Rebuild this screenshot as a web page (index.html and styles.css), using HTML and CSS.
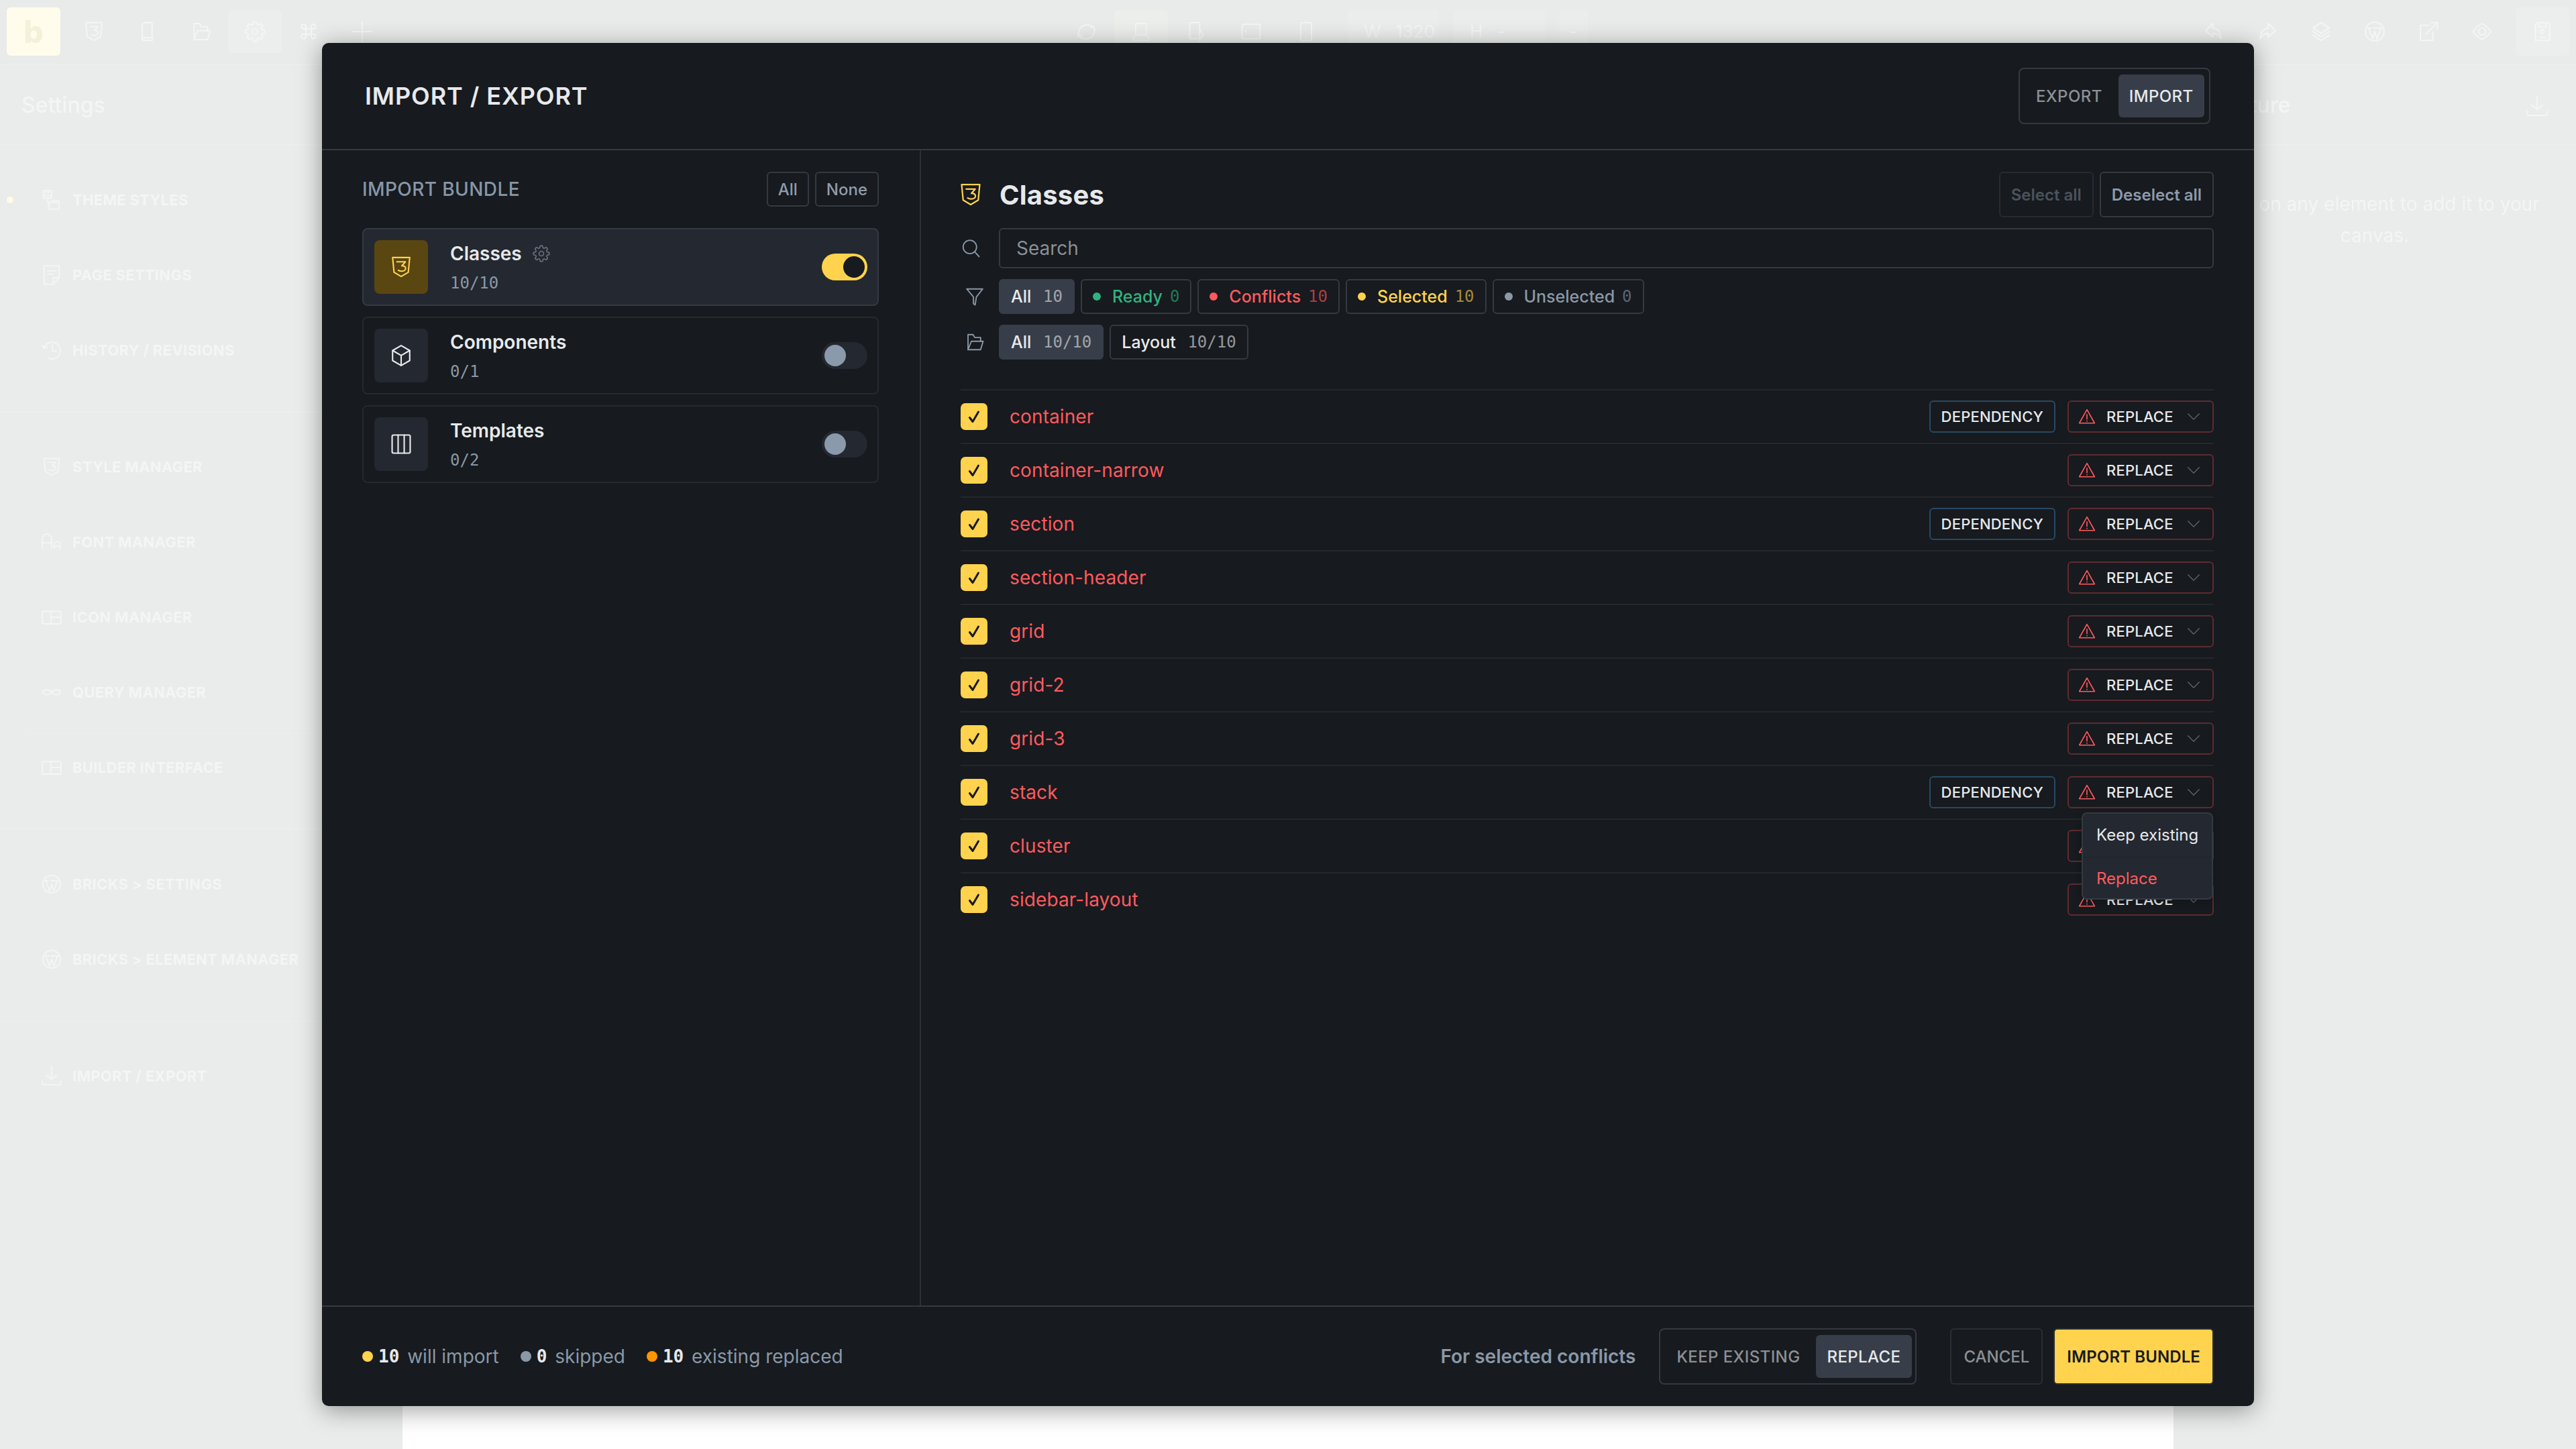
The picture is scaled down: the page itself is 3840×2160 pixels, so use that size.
FILE: index.html
```html
<!DOCTYPE html>
<html lang="en">
<head>
  <meta charset="UTF-8">
  <meta name="viewport" content="width=device-width, initial-scale=1.0">
  <title>Import / Export</title>
  <link rel="stylesheet" href="styles.css">
</head>
<body>
  <svg class="sprite" xmlns="http://www.w3.org/2000/svg">
    <symbol id="i-css" viewBox="0 0 24 24"><path d="M3 2h18l-1.500 15.500L12 22l-7.500-4.500z"/><path d="M7.500 6.500h9l-3.800 4.300c2.600 0 4 1 4 2.700 0 1.700-1.900 2.900-4.200 2.900-1.200 0-2.400-.3-3.500-1"/></symbol>
    <symbol id="i-gear" viewBox="0 0 24 24"><circle cx="12" cy="12" r="3.200"/><path d="M19.400 15a1.650 1.650 0 0 0 .33 1.820l.06.06a2 2 0 0 1-2.830 2.830l-.06-.06a1.650 1.650 0 0 0-1.820-.33 1.650 1.650 0 0 0-1 1.510V21a2 2 0 0 1-4 0v-.09A1.650 1.650 0 0 0 9 19.400a1.650 1.650 0 0 0-1.820.33l-.06.06a2 2 0 0 1-2.830-2.830l.06-.06a1.650 1.650 0 0 0 .33-1.820 1.650 1.650 0 0 0-1.510-1H3a2 2 0 0 1 0-4h.09A1.650 1.650 0 0 0 4.600 9a1.650 1.650 0 0 0-.33-1.820l-.06-.06a2 2 0 0 1 2.830-2.830l.06.06a1.650 1.650 0 0 0 1.820.33H9a1.650 1.650 0 0 0 1-1.510V3a2 2 0 0 1 4 0v.09a1.650 1.650 0 0 0 1 1.510 1.650 1.650 0 0 0 1.820-.33l.06-.06a2 2 0 0 1 2.830 2.830l-.06.06a1.650 1.650 0 0 0-.33 1.820V9a1.650 1.650 0 0 0 1.510 1H21a2 2 0 0 1 0 4h-.09a1.650 1.650 0 0 0-1.510 1z"/></symbol>
    <symbol id="i-box" viewBox="0 0 24 24"><path d="M12 1.500l9 5.200v10.600l-9 5.200-9-5.200V6.700z"/><path d="M3 6.700l9 5.200 9-5.200M12 11.900v10.600"/></symbol>
    <symbol id="i-cols" viewBox="0 0 24 24"><rect x="2.500" y="2.500" width="19" height="19" rx="1.500"/><path d="M8.800 2.500v19M15.200 2.500v19"/></symbol>
    <symbol id="i-search" viewBox="0 0 24 24"><circle cx="11" cy="10.500" r="8"/><path d="M16.800 16.300L22 22"/></symbol>
    <symbol id="i-filter" viewBox="0 0 24 24"><path d="M2.500 3h19l-7.500 9.500-1.500 9.500-2-1.500v-8z"/></symbol>
    <symbol id="i-folder" viewBox="0 0 24 24"><path d="M4 21V3h6l2 3.500h7V11"/><path d="M4 21h15l3-10H8z"/></symbol>
    <symbol id="i-warn" viewBox="0 0 24 24"><path d="M12 2.500L22.500 21h-21z"/><path d="M12 9v6.500M12 18v.5"/></symbol>
    <symbol id="i-chev" viewBox="0 0 24 24"><path d="M2 7l10 10L22 7"/></symbol>
    <symbol id="i-check" viewBox="0 0 24 24"><path d="M5.500 13.500l4.500 6L18.500 5"/></symbol>
    <symbol id="i-page" viewBox="0 0 24 24"><path d="M8 2h9v17H6V4zM6 19v1.500c0 1 .7 1.500 1.500 1.500H17l1-2"/></symbol>
    <symbol id="i-cmd" viewBox="0 0 24 24"><path d="M9 9h6v6H9zM9 9H6.500A2.500 2.500 0 1 1 9 6.500zM15 9V6.500A2.500 2.500 0 1 1 17.500 9zM15 15h2.500a2.500 2.500 0 1 1-2.500 2.500zM9 15v2.500A2.500 2.500 0 1 1 6.500 15z"/></symbol>
    <symbol id="i-plus" viewBox="0 0 24 24"><path d="M12 1v22M1 12h22"/></symbol>
    <symbol id="i-sync" viewBox="0 0 24 24"><path d="M19 6.500A9.500 9.500 0 0 0 4.500 18M5 17.500A9.500 9.500 0 0 0 20 6M2.500 15.500l2 2.500 2.500-2M17 7.500l2.500-1.500 1.500 2.500"/></symbol>
    <symbol id="i-laptop" viewBox="0 0 24 24"><path d="M6 3h12v13H6zM6 16L3 20v2h18v-2l-3-4"/></symbol>
    <symbol id="i-tablet-l" viewBox="0 0 24 24"><path d="M5 2h11v18H5zM16 9l4 7-4 6"/></symbol>
    <symbol id="i-tablet" viewBox="0 0 24 24"><rect x="2" y="4" width="20" height="16" rx="1.500"/><path d="M6 11v1"/></symbol>
    <symbol id="i-phone" viewBox="0 0 24 24"><rect x="6" y="2" width="12" height="20" rx="1.500"/><path d="M12 18v.5"/></symbol>
    <symbol id="i-undo" viewBox="0 0 24 24"><path d="M11 3L3 11l8 7v-4c4 0 7 2 9 6 0-7-3-11-9-12z"/></symbol>
    <symbol id="i-redo" viewBox="0 0 24 24"><path d="M13 3l8 8-8 7v-4c-4 0-7 2-9 6 0-7 3-11 9-12z"/></symbol>
    <symbol id="i-layers" viewBox="0 0 24 24"><path d="M12 2l9 6-9 6-9-6zM3 12l9 6 9-6M3 16l9 6 9-6"/></symbol>
    <symbol id="i-wp" viewBox="0 0 24 24"><circle cx="12" cy="12" r="10.500"/><path d="M5 8l4.500 12L12 12l2.500 8L19 8M4 8h4M11 8h4M16.500 8H20"/></symbol>
    <symbol id="i-ext" viewBox="0 0 24 24"><path d="M12 5H3v17h14v-9M9 15L22 2M15 2h7v7"/></symbol>
    <symbol id="i-eye" viewBox="0 0 24 24"><path d="M12 3c5 3 8 6 10 9-2 3-5 6-10 9-5-3-8-6-10-9 2-3 5-6 10-9z"/><circle cx="12" cy="12" r="4"/></symbol>
    <symbol id="i-save" viewBox="0 0 24 24"><path d="M4 4l3-2h11l2 2v18H4z"/><path d="M8 2v5h8V2"/><circle cx="12" cy="12" r="2"/><path d="M9 18.500h6"/></symbol>
    <symbol id="i-download" viewBox="0 0 24 24"><path d="M12 1v15M6 11l6 5 6-5M1 18v3c0 1 .5 1.500 1.500 1.500h19c1 0 1.500-.5 1.500-1.500v-3"/></symbol>
    <symbol id="i-brush" viewBox="0 0 24 24"><path d="M2 1h10v9H2zM2 7h10M5 1v3M8 1v3M7 10v5h14v8H9v-8M12 13h9"/></symbol>
    <symbol id="i-doc" viewBox="0 0 24 24"><path d="M3 1h18v14l-7 8H3zM7 7h10M7 11h7M14 23v-8h7"/></symbol>
    <symbol id="i-history" viewBox="0 0 24 24"><path d="M3 9A10 10 0 1 1 9 22M1 6l2 4 4-2M13 6v7h5"/></symbol>
    <symbol id="i-font" viewBox="0 0 24 24"><path d="M1 20V8a5.500 5.500 0 0 1 11 0v12M1 13h11M15 20v-5a3.500 3.500 0 0 1 7 0v5M15 17h7"/></symbol>
    <symbol id="i-layout" viewBox="0 0 24 24"><rect x="1" y="5" width="22" height="15" rx="1"/><path d="M11 5v15M11 12h12"/></symbol>
    <symbol id="i-query" viewBox="0 0 24 24"><path d="M12 12C9 8 3 8 1.500 12 3 16 9 16 12 12c3-4 9-4 10.500 0C21 16 15 16 12 12z"/></symbol>
  </svg>

  <!-- builder behind the modal -->
  <header class="topbar">
    <div class="bar-group">
      <div class="logo">b</div>
      <span class="bar-btn"><svg class="bar-icon"><use href="#i-css"/></svg></span>
      <span class="bar-btn"><svg class="bar-icon"><use href="#i-page"/></svg></span>
      <span class="bar-btn"><svg class="bar-icon"><use href="#i-folder"/></svg></span>
      <span class="bar-btn is-active"><svg class="bar-icon"><use href="#i-gear"/></svg></span>
      <span class="bar-btn"><svg class="bar-icon"><use href="#i-cmd"/></svg></span>
      <span class="bar-btn"><svg class="bar-icon"><use href="#i-plus"/></svg></span>
    </div>
    <div class="bar-group bar-center">
      <span class="bar-btn"><svg class="bar-icon"><use href="#i-sync"/></svg></span>
      <span class="bar-btn is-active is-laptop"><svg class="bar-icon"><use href="#i-laptop"/></svg></span>
      <span class="bar-btn"><svg class="bar-icon"><use href="#i-tablet-l"/></svg></span>
      <span class="bar-btn"><svg class="bar-icon"><use href="#i-tablet"/></svg></span>
      <span class="bar-btn"><svg class="bar-icon"><use href="#i-phone"/></svg></span>
      <span class="size-box">W <b>1320</b></span>
      <span class="size-box">H <b>-</b></span>
      <span class="size-box size-small">-</span>
    </div>
    <div class="bar-group bar-right">
      <span class="bar-btn"><svg class="bar-icon"><use href="#i-undo"/></svg></span>
      <span class="bar-btn"><svg class="bar-icon"><use href="#i-redo"/></svg></span>
      <span class="bar-btn"><svg class="bar-icon"><use href="#i-layers"/></svg></span>
      <span class="bar-btn"><svg class="bar-icon"><use href="#i-wp"/></svg></span>
      <span class="bar-btn"><svg class="bar-icon"><use href="#i-ext"/></svg></span>
      <span class="bar-btn"><svg class="bar-icon"><use href="#i-eye"/></svg></span>
      <span class="bar-btn is-save"><svg class="bar-icon"><use href="#i-save"/></svg></span>
    </div>
  </header>

  <div class="builder">
    <aside class="side side-left">
      <div class="side-head">Settings</div>
      <div class="side-group">
        <span class="side-dot"></span>
        <div class="side-row"><svg class="side-icon"><use href="#i-brush"/></svg>THEME STYLES</div>
        <div class="side-row"><svg class="side-icon"><use href="#i-doc"/></svg>PAGE SETTINGS</div>
        <div class="side-row"><svg class="side-icon"><use href="#i-history"/></svg>HISTORY / REVISIONS</div>
      </div>
      <div class="side-group">
        <div class="side-row"><svg class="side-icon"><use href="#i-css"/></svg>STYLE MANAGER</div>
        <div class="side-row"><svg class="side-icon"><use href="#i-font"/></svg>FONT MANAGER</div>
        <div class="side-row"><svg class="side-icon"><use href="#i-layout"/></svg>ICON MANAGER</div>
        <div class="side-row"><svg class="side-icon"><use href="#i-query"/></svg>QUERY MANAGER</div>
        <div class="side-row"><svg class="side-icon"><use href="#i-layout"/></svg>BUILDER INTERFACE</div>
      </div>
      <div class="side-group">
        <div class="side-row"><svg class="side-icon"><use href="#i-wp"/></svg>BRICKS &gt; SETTINGS</div>
        <div class="side-row"><svg class="side-icon"><use href="#i-wp"/></svg>BRICKS &gt; ELEMENT MANAGER</div>
      </div>
      <div class="side-group">
        <div class="side-row"><svg class="side-icon"><use href="#i-download"/></svg>IMPORT / EXPORT</div>
      </div>
    </aside>
    <main class="canvas"></main>
    <aside class="side side-right">
      <div class="side-head">Structure<svg class="head-icon"><use href="#i-download"/></svg></div>
      <p class="side-note">Click on any element to add it to your canvas.</p>
    </aside>
  </div>

  <!-- modal -->
  <section class="modal">
    <div class="modal-head">
      <h1>IMPORT / EXPORT</h1>
      <div class="seg seg-head">
        <button class="seg-btn">EXPORT</button>
        <button class="seg-btn is-on">IMPORT</button>
      </div>
    </div>

    <div class="modal-body">
      <div class="bundle">
        <div class="bundle-head">
          <h2>IMPORT BUNDLE</h2>
          <div class="mini-btns">
            <button class="mini-btn">All</button>
            <button class="mini-btn">None</button>
          </div>
        </div>

        <div class="bundle-card is-on">
          <div class="card-icon is-on"><svg class="card-svg"><use href="#i-css"/></svg></div>
          <div class="card-text">
            <div class="card-name">Classes<svg class="card-gear"><use href="#i-gear"/></svg></div>
            <div class="card-count">10/10</div>
          </div>
          <span class="toggle is-on"><i></i></span>
        </div>
        <div class="bundle-card">
          <div class="card-icon"><svg class="card-svg"><use href="#i-box"/></svg></div>
          <div class="card-text">
            <div class="card-name">Components</div>
            <div class="card-count">0/1</div>
          </div>
          <span class="toggle"><i></i></span>
        </div>
        <div class="bundle-card">
          <div class="card-icon"><svg class="card-svg"><use href="#i-cols"/></svg></div>
          <div class="card-text">
            <div class="card-name">Templates</div>
            <div class="card-count">0/2</div>
          </div>
          <span class="toggle"><i></i></span>
        </div>
      </div>

      <div class="detail">
        <div class="detail-head">
          <svg class="detail-icon"><use href="#i-css"/></svg>
          <h2>Classes</h2>
          <button class="sel-btn is-dim">Select all</button>
          <button class="sel-btn">Deselect all</button>
        </div>

        <div class="tool-row tool-search">
          <svg class="tool-icon"><use href="#i-search"/></svg>
          <input class="search" type="text" placeholder="Search">
        </div>
        <div class="tool-row">
          <svg class="tool-icon is-shift"><use href="#i-filter"/></svg>
          <span class="chip is-on">All <span class="num">10</span></span>
          <span class="chip c-green"><i class="dot"></i><span class="chip-label">Ready</span> <span class="num">0</span></span>
          <span class="chip c-red"><i class="dot"></i><span class="chip-label">Conflicts</span> <span class="num">10</span></span>
          <span class="chip c-yellow"><i class="dot"></i><span class="chip-label">Selected</span> <span class="num">10</span></span>
          <span class="chip c-gray"><i class="dot"></i><span class="chip-label">Unselected</span> <span class="num">0</span></span>
        </div>
        <div class="tool-row">
          <svg class="tool-icon is-shift"><use href="#i-folder"/></svg>
          <span class="chip is-on">All <span class="num">10/10</span></span>
          <span class="chip c-white">Layout <span class="num">10/10</span></span>
        </div>

        <ul class="class-list">
          <li class="class-row">
            <span class="check"><svg class="check-svg"><use href="#i-check"/></svg></span>
            <span class="class-name">container</span>
            <span class="tag">DEPENDENCY</span>
            <span class="action"><svg class="warn"><use href="#i-warn"/></svg>REPLACE<svg class="chev"><use href="#i-chev"/></svg></span>
          </li>
          <li class="class-row">
            <span class="check"><svg class="check-svg"><use href="#i-check"/></svg></span>
            <span class="class-name">container-narrow</span>
            <span class="action"><svg class="warn"><use href="#i-warn"/></svg>REPLACE<svg class="chev"><use href="#i-chev"/></svg></span>
          </li>
          <li class="class-row">
            <span class="check"><svg class="check-svg"><use href="#i-check"/></svg></span>
            <span class="class-name">section</span>
            <span class="tag">DEPENDENCY</span>
            <span class="action"><svg class="warn"><use href="#i-warn"/></svg>REPLACE<svg class="chev"><use href="#i-chev"/></svg></span>
          </li>
          <li class="class-row">
            <span class="check"><svg class="check-svg"><use href="#i-check"/></svg></span>
            <span class="class-name">section-header</span>
            <span class="action"><svg class="warn"><use href="#i-warn"/></svg>REPLACE<svg class="chev"><use href="#i-chev"/></svg></span>
          </li>
          <li class="class-row">
            <span class="check"><svg class="check-svg"><use href="#i-check"/></svg></span>
            <span class="class-name">grid</span>
            <span class="action"><svg class="warn"><use href="#i-warn"/></svg>REPLACE<svg class="chev"><use href="#i-chev"/></svg></span>
          </li>
          <li class="class-row">
            <span class="check"><svg class="check-svg"><use href="#i-check"/></svg></span>
            <span class="class-name">grid-2</span>
            <span class="action"><svg class="warn"><use href="#i-warn"/></svg>REPLACE<svg class="chev"><use href="#i-chev"/></svg></span>
          </li>
          <li class="class-row">
            <span class="check"><svg class="check-svg"><use href="#i-check"/></svg></span>
            <span class="class-name">grid-3</span>
            <span class="action"><svg class="warn"><use href="#i-warn"/></svg>REPLACE<svg class="chev"><use href="#i-chev"/></svg></span>
          </li>
          <li class="class-row">
            <span class="check"><svg class="check-svg"><use href="#i-check"/></svg></span>
            <span class="class-name">stack</span>
            <span class="tag">DEPENDENCY</span>
            <span class="action is-open"><svg class="warn"><use href="#i-warn"/></svg>REPLACE<svg class="chev"><use href="#i-chev"/></svg>
              <span class="menu">
                <span class="menu-item">Keep existing</span>
                <span class="menu-item is-red">Replace</span>
              </span>
            </span>
          </li>
          <li class="class-row">
            <span class="check"><svg class="check-svg"><use href="#i-check"/></svg></span>
            <span class="class-name">cluster</span>
            <span class="action"><svg class="warn"><use href="#i-warn"/></svg>REPLACE<svg class="chev"><use href="#i-chev"/></svg></span>
          </li>
          <li class="class-row">
            <span class="check"><svg class="check-svg"><use href="#i-check"/></svg></span>
            <span class="class-name">sidebar-layout</span>
            <span class="action"><svg class="warn"><use href="#i-warn"/></svg>REPLACE<svg class="chev"><use href="#i-chev"/></svg></span>
          </li>
        </ul>
      </div>
    </div>

    <div class="modal-foot">
      <div class="stats">
        <span class="stat"><i class="stat-dot s-yellow"></i><b>10</b> will import</span>
        <span class="stat"><i class="stat-dot s-gray"></i><b>0</b> skipped</span>
        <span class="stat"><i class="stat-dot s-orange"></i><b>10</b> existing replaced</span>
      </div>
      <span class="foot-label">For selected conflicts</span>
      <div class="seg seg-foot">
        <button class="seg-btn">KEEP EXISTING</button>
        <button class="seg-btn is-on">REPLACE</button>
      </div>
      <button class="foot-btn">CANCEL</button>
      <button class="foot-btn is-primary">IMPORT BUNDLE</button>
    </div>
  </section>
</body>
</html>
```

FILE: styles.css
```css
* {
  box-sizing: border-box;
}
html, body {
  margin: 0;
  height: 2160px;
  overflow: hidden;
}
body {
  position: relative;
  font-family: Inter, "Noto Sans", sans-serif;
  background-color: #e9ebea;
  color: #f4f5f5;
}
button, input {
  font-family: inherit;
}
h1, h2, p, ul {
  margin: 0;
  padding: 0;
}
.sprite {
  display: none;
}
svg {
  fill: none;
  stroke: currentColor;
  stroke-width: 1.5;
  stroke-linejoin: round;
  stroke-linecap: round;
}

/* faded builder */
.topbar {
  display: flex;
  height: 97px;
  padding: 11px 10px 0;
  border-bottom: 2px solid #eceeed;
}
.bar-group {
  display: flex;
  height: 72px;
}
.bar-center {
  margin-left: 999px;
  gap: 2px;
}
.bar-right {
  margin-left: auto;
}
.logo {
  width: 80px;
  height: 72px;
  margin-right: 10px;
  border-radius: 6px;
  background-color: #fffcec;
  color: #f5f0da;
  font-size: 46px;
  font-weight: 800;
  line-height: 72px;
  text-align: center;
}
.bar-btn {
  display: flex;
  align-items: center;
  justify-content: center;
  width: 80px;
  height: 72px;
}
.bar-btn.is-active {
  height: 64px;
  margin-top: 4px;
  border-radius: 6px;
  background-color: #eceeed;
}
.bar-btn.is-laptop {
  background-color: #eceeec;
}
.bar-btn.is-save {
  margin-left: 10px;
  background-color: #eceeed;
  border-radius: 6px;
}
.bar-icon {
  width: 32px;
  height: 34px;
}
.size-box {
  width: 136px;
  height: 64px;
  margin: 4px 0 0 20px;
  padding-left: 24px;
  border-radius: 4px;
  background-color: #ebedec;
  font-size: 26px;
  line-height: 64px;
}
.size-box b {
  margin-left: 14px;
  font-weight: 400;
}
.size-small {
  width: 42px;
  padding-left: 14px;
}
.builder {
  display: flex;
  height: 2063px;
}
.side {
  flex: 0 0 600px;
  background-color: #eaebeb;
}
.canvas {
  flex: 1;
  background-color: #ffffff;
}
.side-head {
  display: flex;
  align-items: center;
  justify-content: space-between;
  height: 120px;
  padding: 0 42px 0 32px;
  border-bottom: 2px solid #eceeed;
  font-size: 32px;
  font-weight: 500;
}
.head-icon {
  width: 32px;
  height: 36px;
  margin-top: 4px;
}
.side-group {
  position: relative;
  display: flex;
  flex-direction: column;
  gap: 8px;
  padding: 29px 0 39px 32px;
  border-bottom: 2px solid #eceeed;
}
.side-group:last-child {
  border-bottom: none;
}
.side-dot {
  position: absolute;
  left: 10px;
  top: 76px;
  width: 10px;
  height: 10px;
  border-radius: 50%;
  background-color: #fffbe4;
}
.side-row {
  display: flex;
  align-items: center;
  gap: 16px;
  height: 104px;
  padding-left: 30px;
  font-size: 22px;
  font-weight: 700;
  letter-spacing: 0.3px;
  white-space: nowrap;
  border-radius: 6px;
  background-color: #eaebeb;
  box-shadow: inset 0 1px 0 #ecedec;
}
.side-icon {
  width: 30px;
  height: 32px;
}
.side-note {
  padding: 64px 30px 0;
  font-size: 28px;
  line-height: 47px;
  text-align: center;
}

/* modal */
.modal {
  position: absolute;
  left: 480px;
  top: 64px;
  display: flex;
  flex-direction: column;
  width: 2880px;
  height: 2032px;
  border-radius: 10px;
  background-color: #171a1e;
  color: #e6e9ec;
  box-shadow: 0 6px 36px rgba(0, 0, 0, 0.38);
}
.modal-head {
  display: flex;
  align-items: center;
  justify-content: space-between;
  flex: 0 0 160px;
  padding: 0 65px 0 64px;
  border-bottom: 2px solid #343a43;
}
.modal-head h1 {
  font-size: 36px;
  font-weight: 600;
  letter-spacing: 0.9px;
}
.seg {
  display: flex;
  height: 84px;
  border: 2px solid #343a43;
  border-radius: 8px;
  padding: 8px;
  gap: 8px;
  align-items: stretch;
}
.seg-btn {
  padding: 0 16px;
  border: none;
  border-radius: 6px;
  background: none;
  color: #8b9096;
  font-size: 24px;
  font-weight: 500;
  letter-spacing: 0.4px;
  white-space: nowrap;
}
.seg-btn.is-on {
  background-color: #373e49;
  color: #e6e9ec;
}
.seg-head {
  width: 286px;
}
.seg-foot {
  width: 384px;
  justify-content: space-between;
}
.modal-body {
  display: flex;
  flex: 1;
  min-height: 0;
}

/* left column */
.bundle {
  flex: 0 0 893px;
  padding: 32px 61px 0 60px;
  border-right: 2px solid #2c3138;
}
.bundle-head {
  display: flex;
  align-items: center;
  justify-content: space-between;
  height: 52px;
  margin-bottom: 32px;
}
.bundle-head h2 {
  color: #8796a8;
  font-size: 28px;
  font-weight: 500;
  letter-spacing: 0.4px;
}
.mini-btns {
  display: flex;
  gap: 9px;
}
.mini-btn {
  height: 52px;
  padding: 0 15px;
  border: 2px solid #343a43;
  border-radius: 6px;
  background: none;
  color: #8f9cab;
  font-size: 24px;
  font-weight: 500;
}
.bundle-card {
  display: flex;
  align-items: center;
  height: 116px;
  margin-bottom: 16px;
  padding: 0 15px 0 16px;
  border: 2px solid #262a30;
  border-radius: 8px;
}
.bundle-card.is-on {
  border-color: #343a43;
  background-color: #242830;
}
.card-icon {
  display: flex;
  align-items: center;
  justify-content: center;
  width: 80px;
  height: 80px;
  border-radius: 8px;
  background-color: #242830;
  color: #e6e9ec;
}
.card-icon.is-on {
  background-color: #5a4610;
  color: #ffd34d;
}
.card-svg {
  width: 34px;
  height: 34px;
}
.card-text {
  flex: 1;
  margin-left: 33px;
}
.card-name {
  display: flex;
  align-items: center;
  gap: 16px;
  height: 36px;
  font-size: 28px;
  font-weight: 600;
}
.card-gear {
  width: 26px;
  height: 26px;
  color: #66727f;
}
.card-count {
  margin-top: 12px;
  color: #8a98a8;
  font-family: "DejaVu Sans Mono", monospace;
  font-size: 24px;
  line-height: 28px;
}
.toggle {
  display: block;
  width: 68px;
  height: 40px;
  padding: 4px;
  border-radius: 20px;
  background-color: #242830;
}
.toggle i {
  display: block;
  width: 32px;
  height: 32px;
  border-radius: 50%;
  background-color: #8a9aab;
}
.toggle.is-on {
  background-color: #ffd34d;
}
.toggle.is-on i {
  margin-left: 28px;
  background-color: #171a1e;
}

/* right column */
.detail {
  flex: 1;
  min-width: 0;
  padding: 32px 60px 0 59px;
}
.detail-head {
  display: flex;
  align-items: center;
  gap: 9px;
  height: 68px;
}
.detail-icon {
  width: 38px;
  height: 36px;
  margin-left: -4px;
  margin-right: 15px;
  color: #ffd34d;
}
.detail-head h2 {
  flex: 1;
  font-size: 40px;
  font-weight: 700;
  letter-spacing: 0.2px;
}
.sel-btn {
  height: 68px;
  padding: 0 16px;
  border: 2px solid #343a43;
  border-radius: 6px;
  background: none;
  color: #8c9bab;
  font-size: 24px;
  font-weight: 600;
}
.sel-btn.is-dim {
  border-color: #272b31;
  color: #4b535d;
}
.tool-row {
  display: flex;
  align-items: center;
  gap: 9px;
  height: 52px;
  margin-top: 16px;
}
.tool-search {
  height: 60px;
}
.tool-icon {
  flex: none;
  width: 30px;
  height: 30px;
  margin-right: 18px;
  color: #8a98a8;
}
.tool-icon.is-shift {
  margin-left: 6px;
  margin-right: 12px;
}
.search {
  flex: 1;
  height: 60px;
  padding: 0 24px;
  border: 2px solid #343a43;
  border-radius: 6px;
  background: none;
  color: #e6e9ec;
  font-size: 28px;
}
.search::placeholder {
  color: #8a8f95;
}
.chip {
  display: flex;
  align-items: center;
  height: 52px;
  padding: 0 16px;
  border: 2px solid #343a43;
  border-radius: 6px;
  font-size: 25px;
  font-weight: 500;
  white-space: pre;
}
.chip.is-on {
  border-color: #373e49;
  background-color: #373e49;
  color: #e6e9ec;
}
.num {
  margin-left: 11px;
  opacity: 0.6;
  font-family: "DejaVu Sans Mono", monospace;
  font-size: 24px;
  font-weight: 400;
}
.dot {
  width: 12px;
  height: 12px;
  margin-right: 17px;
  border-radius: 50%;
  background-color: currentColor;
}
.c-green { color: #2fb380; }
.c-red { color: #ff5a5f; }
.c-yellow { color: #ffd34d; }
.c-gray { color: #8a98a8; }
.c-white { color: #e6e9ec; }
.class-list {
  margin-top: 44px;
  border-top: 2px solid #24282e;
  list-style: none;
}
.class-row {
  display: flex;
  align-items: center;
  height: 80px;
  border-bottom: 2px solid #24282e;
}
.class-row:last-child {
  border-bottom-color: transparent;
}
.check {
  display: flex;
  align-items: center;
  justify-content: center;
  width: 40px;
  height: 40px;
  border-radius: 7px;
  background-color: #ffd34d;
  color: #171a1e;
}
.check-svg {
  width: 24px;
  height: 24px;
  stroke-width: 3;
}
.class-name {
  flex: 1;
  margin-left: 33px;
  color: #ff5a5f;
  font-size: 28px;
  letter-spacing: 0.1px;
}
.tag {
  display: flex;
  align-items: center;
  height: 48px;
  margin-right: 18px;
  padding: 0 16px;
  border: 2px solid #274a63;
  border-radius: 6px;
  font-size: 22px;
  font-weight: 500;
  letter-spacing: 0.2px;
}
.action {
  position: relative;
  display: flex;
  align-items: center;
  width: 218px;
  height: 48px;
  padding-left: 14px;
  border: 2px solid #5d2c30;
  border-radius: 6px;
  font-size: 22px;
  font-weight: 500;
  letter-spacing: 0.2px;
}
.warn {
  width: 26px;
  height: 26px;
  margin-right: 16px;
  color: #ff5a5f;
}
.chev {
  width: 20px;
  height: 20px;
  margin-left: 20px;
  color: #5b6570;
  stroke-width: 1.6;
}
.menu {
  position: absolute;
  z-index: 2;
  left: 19px;
  top: 52px;
  width: 196px;
  height: 130px;
  display: flex;
  flex-direction: column;
  border: 2px solid #343a43;
  border-radius: 8px;
  background-color: #242830;
  box-shadow: 0 4px 12px rgba(0, 0, 0, 0.2);
  letter-spacing: 0;
}
.menu-item {
  flex: 1;
  padding-left: 20px;
  border-bottom: 2px solid #22262c;
  font-size: 24px;
  font-weight: 400;
  line-height: 64px;
  white-space: nowrap;
}
.menu-item:last-child {
  border-bottom: none;
  line-height: 62px;
}
.menu-item.is-red {
  color: #ff5a5f;
}

/* footer */
.modal-foot {
  display: flex;
  align-items: center;
  flex: 0 0 150px;
  padding: 0 60px;
  border-top: 2px solid #343a43;
}
.stats {
  display: flex;
  flex: 1;
  gap: 32px;
  color: #8a98a8;
  font-size: 28px;
}
.stat {
  display: flex;
  align-items: center;
  white-space: pre;
}
.stat b {
  margin-right: 4px;
  color: #e6e9ec;
  font-family: "DejaVu Sans Mono", monospace;
  font-size: 26px;
  font-weight: 700;
}
.stat-dot {
  width: 16px;
  height: 16px;
  margin-right: 8px;
  border-radius: 50%;
}
.s-yellow { background-color: #ffd34d; }
.s-gray { background-color: #8a98a8; }
.s-orange { background-color: #ff9500; }
.foot-label {
  margin-right: 35px;
  color: #8a98a8;
  font-size: 28px;
  font-weight: 600;
}
.foot-btn {
  height: 84px;
  margin-left: 16px;
  padding: 0 18px;
  border: 2px solid #2a2e34;
  border-radius: 6px;
  background: none;
  color: #8b9096;
  font-size: 24px;
  font-weight: 500;
}
.seg-foot + .foot-btn {
  margin-left: 50px;
}
.foot-btn.is-primary {
  border-color: #2a2e34;
  background-color: #ffd34d;
  color: #171a1e;
  font-weight: 600;
  letter-spacing: 0.1px;
}
```
